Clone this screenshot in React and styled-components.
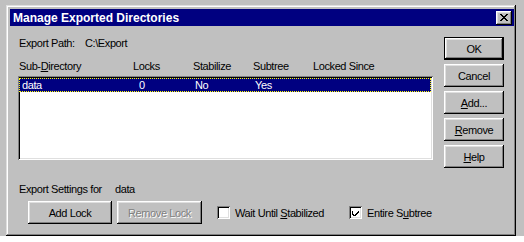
import React from 'react';
import styled, { createGlobalStyle } from 'styled-components';

const Global = createGlobalStyle`
  html, body { margin: 0; padding: 0; background: #ffffff; }
  body { font-family: "Liberation Sans", Arial, sans-serif; font-size: 11px; }
  * { box-sizing: border-box; }
`;

const Screen = styled.div`
  width: 524px;
  height: 236px;
  background: #c0c0c0;
  padding: 5px 8px 0 6px;
`;

const Window = styled.div`
  width: 510px;
  height: 231px;
  background: #c0c0c0;
  box-shadow: inset -1px -1px #000, inset 1px 1px #dfdfdf, inset -2px -2px #808080, inset 2px 2px #fff;
  padding: 4px 2px 4px 4px;
  display: flex;
  flex-direction: column;
`;

const TitleBar = styled.div`
  height: 17px;
  background: #000080;
  color: #fff;
  font-weight: bold;
  font-size: 12px;
  display: flex;
  align-items: center;
  justify-content: space-between;
  padding: 0 2px 0 3px;
`;

const CloseBtn = styled.div`
  width: 16px;
  height: 14px;
  background: #c0c0c0;
  box-shadow: inset -1px -1px #000, inset 1px 1px #fff, inset -2px -2px #808080, inset 2px 2px #dfdfdf;
  display: flex;
  align-items: center;
  justify-content: center;
`;

const Body = styled.div`
  flex: 1;
  display: flex;
  flex-direction: column;
  padding: 11px 0 0 8px;
  color: #000;
  letter-spacing: -0.4px;
`;

const Top = styled.div`
  display: flex;
`;

const Main = styled.div`
  width: 415px;
  display: flex;
  flex-direction: column;
`;

const TextRow = styled.div`
  display: flex;
  height: 13px;
  line-height: 13px;
  padding-left: 1px;
`;

const Label = styled.span`
  width: ${p => p.$w}px;
  flex: none;
`;

const Grid = styled.div`
  display: grid;
  grid-template-columns: 114px 60px 60px 60px 1fr;
  height: ${p => p.$h || 13}px;
  line-height: ${p => p.$h || 13}px;
`;

const HeaderRow = styled(Grid)`
  margin-top: 10px;
  padding-left: 1px;
`;

const Cell = styled.span`
  padding-left: ${p => p.$pad || 0}px;
  white-space: nowrap;
`;

const ListBox = styled.div`
  margin-top: 3px;
  height: 84px;
  background: #fff;
  box-shadow: inset 1px 1px #808080, inset -1px -1px #fff, inset 2px 2px #000, inset -2px -2px #dfdfdf;
  padding: 2px;
`;

const SelRow = styled(Grid)`
  background: #000080;
  color: #fff;
  outline: 1px dotted #ffff00;
  outline-offset: -1px;
  margin-left: -1px;
`;

const Buttons = styled.div`
  margin-left: 11px;
  display: flex;
  flex-direction: column;
  gap: 4px;
`;

const Button = styled.div`
  width: ${p => p.$w || 60}px;
  height: ${p => p.$h || 23}px;
  background: #c0c0c0;
  color: ${p => (p.$disabled ? '#808080' : '#000')};
  text-shadow: ${p => (p.$disabled ? '1px 1px #fff' : 'none')};
  display: flex;
  align-items: center;
  justify-content: center;
  box-shadow: ${p =>
    p.$default
      ? 'inset 0 0 0 1px #000, inset -2px -2px #000, inset 2px 2px #fff, inset -3px -3px #808080, inset 3px 3px #dfdfdf'
      : 'inset -1px -1px #000, inset 1px 1px #fff, inset -2px -2px #808080, inset 2px 2px #dfdfdf'};
`;

const U = styled.span`
  text-decoration: underline;
  text-underline-offset: 1px;
`;

const Bottom = styled.div`
  display: flex;
  flex-direction: column;
  margin-top: 15px;
`;

const ButtonRow = styled.div`
  display: flex;
  align-items: center;
  margin-top: 5px;
  padding-left: 10px;
  gap: 5px;
`;

const Check = styled.label`
  display: flex;
  align-items: center;
  gap: 5px;
  margin-left: ${p => p.$ml || 0}px;
`;

const Box = styled.span`
  width: 13px;
  height: 13px;
  background: #fff;
  box-shadow: inset 1px 1px #808080, inset -1px -1px #fff, inset 2px 2px #000, inset -2px -2px #dfdfdf;
  display: flex;
  align-items: center;
  justify-content: center;
`;

const CheckMark = () => (
  <svg width="7" height="7" viewBox="0 0 7 7" shapeRendering="crispEdges">
    <path d="M0 2h1v3h1v1h1v-1h1v-1h1v-1h1v-1h1v2h-1v1h-1v1h-1v1h-1v1h-1v-1h-1v-1h-1z" fill="#000" />
  </svg>
);

const CloseX = () => (
  <svg width="8" height="7" viewBox="0 0 8 7" shapeRendering="crispEdges">
    <path d="M0 0h2v1h1v1h2v-1h1v-1h2v1h-1v1h-1v1h-1v1h1v1h1v1h1v1h-2v-1h-1v-1h-2v1h-1v1h-2v-1h1v-1h1v-1h1v-1h-1v-1h-1v-1h-1z" fill="#000" />
  </svg>
);

export default function App() {
  return (
    <>
      <Global />
      <Screen>
        <Window>
          <TitleBar>
            <span>Manage Exported Directories</span>
            <CloseBtn><CloseX /></CloseBtn>
          </TitleBar>
          <Body>
            <Top>
              <Main>
                <TextRow>
                  <Label $w={66}>Export Path:</Label>
                  <span>C:\Export</span>
                </TextRow>
                <HeaderRow>
                  <Cell>Sub-<U>D</U>irectory</Cell>
                  <Cell>Locks</Cell>
                  <Cell>Stabilize</Cell>
                  <Cell>Subtree</Cell>
                  <Cell>Locked Since</Cell>
                </HeaderRow>
                <ListBox>
                  <SelRow $h={14}>
                    <Cell $pad={3}>data</Cell>
                    <Cell $pad={6}>0</Cell>
                    <Cell $pad={2}>No</Cell>
                    <Cell $pad={2}>Yes</Cell>
                    <Cell />
                  </SelRow>
                </ListBox>
              </Main>
              <Buttons>
                <Button $default>OK</Button>
                <Button>Cancel</Button>
                <Button><span><U>A</U>dd...</span></Button>
                <Button><span><U>R</U>emove</span></Button>
                <Button><span><U>H</U>elp</span></Button>
              </Buttons>
            </Top>
            <Bottom>
              <TextRow>
                <Label $w={96}>Export Settings for</Label>
                <span>data</span>
              </TextRow>
              <ButtonRow>
                <Button $w={84}>Add Lock</Button>
                <Button $w={85} $disabled>Remove Lock</Button>
                <Check $ml={10}>
                  <Box />
                  <span>Wait Until <U>S</U>tabilized</span>
                </Check>
                <Check $ml={20}>
                  <Box><CheckMark /></Box>
                  <span>Entire S<U>u</U>btree</span>
                </Check>
              </ButtonRow>
            </Bottom>
          </Body>
        </Window>
      </Screen>
    </>
  );
}
